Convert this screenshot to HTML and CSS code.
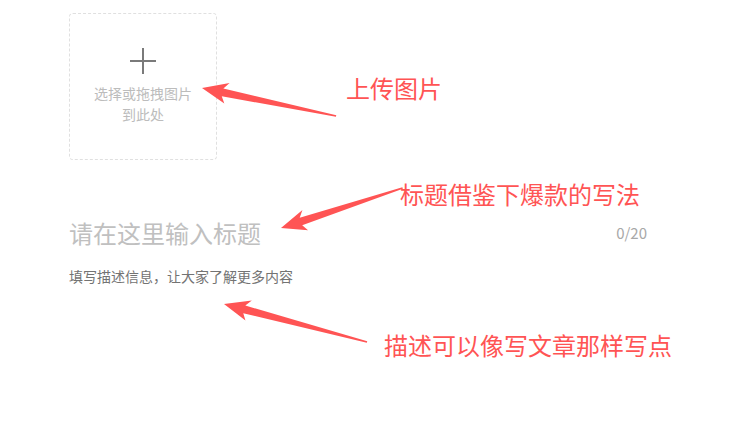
FILE: index.html
```html
<!DOCTYPE html>
<html lang="zh-CN">
<head>
<meta charset="utf-8">
<title>发布</title>
<link rel="stylesheet" href="styles.css">
</head>
<body>
<div class="editor">
  <div class="uploader">
    <svg class="plus" viewBox="0 0 26 26" aria-hidden="true">
      <path d="M13 0 V26 M0 13 H26" fill="none" stroke="currentColor" stroke-width="2"/>
    </svg>
    <p class="uploader-text">选择或拖拽图片<br>到此处</p>
  </div>
  <div class="title-row">
    <span class="title-placeholder">请在这里输入标题</span>
    <span class="counter">0/20</span>
  </div>
  <p class="desc">填写描述信息，让大家了解更多内容</p>
</div>

<svg class="annotations" viewBox="0 0 739 448" aria-hidden="true">
  <g transform="translate(202 88) rotate(11.8)">
    <polygon points="0,0 26,-10.5 21,-4 137,-0.8 137,0.8 21,4 25,10.5"/>
  </g>
  <g transform="translate(281 228) rotate(-18.2)">
    <polygon points="0,0 26,-10.5 21,-4 128,-0.8 128,0.8 21,4 25,10.5"/>
  </g>
  <g transform="translate(224 304) rotate(14.9)">
    <polygon points="0,0 26,-10.5 21,-4 148,-0.8 148,0.8 21,4 25,10.5"/>
  </g>
</svg>
<span class="note note-upload">上传图片</span>
<span class="note note-title">标题借鉴下爆款的写法</span>
<span class="note note-desc">描述可以像写文章那样写点</span>
</body>
</html>
```
FILE: styles.css
```css
html, body {
  margin: 0;
  padding: 0;
  background: #ffffff;
}

body {
  position: relative;
  width: 739px;
  height: 448px;
  overflow: hidden;
  font-family: "Noto Sans CJK SC", "Noto Sans", sans-serif;
}

.editor {
  padding: 13px 0 0 69px;
}

.uploader {
  width: 148px;
  height: 147px;
  box-sizing: border-box;
  border: 1px dashed #e0e0e0;
  border-radius: 4px;
  display: flex;
  flex-direction: column;
  align-items: center;
  justify-content: center;
}

.plus {
  width: 26px;
  height: 26px;
  color: #7a7a7a;
  display: block;
}

.uploader-text {
  margin: 9px 0 0;
  font-size: 14px;
  line-height: 21px;
  color: #bcbcbc;
  text-align: center;
}

.title-row {
  display: flex;
  justify-content: space-between;
  align-items: center;
  width: 578px;
  margin-top: 56px;
}

.title-placeholder {
  font-size: 24px;
  line-height: 34px;
  color: #c0c0c0;
}

.counter {
  font-size: 15px;
  line-height: 20px;
  color: #a8a8a8;
}

.desc {
  margin: 16px 0 0;
  font-size: 14px;
  line-height: 20px;
  color: #737373;
}

.annotations {
  position: absolute;
  left: 0;
  top: 0;
  width: 739px;
  height: 448px;
  pointer-events: none;
  fill: #ff5454;
}

.note {
  position: absolute;
  font-size: 24px;
  line-height: 24px;
  color: #ff5454;
  white-space: nowrap;
}

.note-upload {
  left: 346px;
  top: 76px;
}

.note-title {
  left: 400px;
  top: 182px;
}

.note-desc {
  left: 384px;
  top: 333px;
}
```
